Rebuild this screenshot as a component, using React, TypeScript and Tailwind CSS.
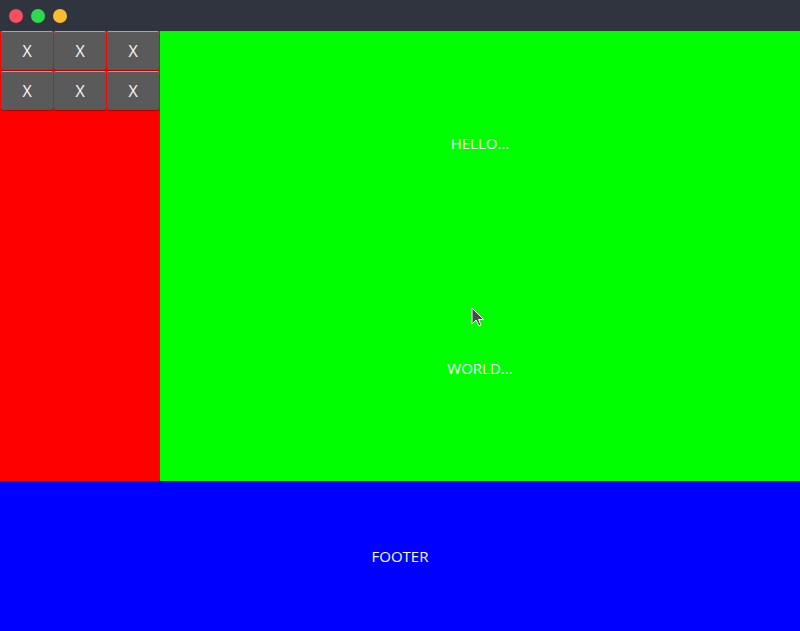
export default function App() {
  const cells = Array.from({ length: 6 });

  return (
    <div className="flex h-[631px] w-[800px] flex-col bg-[#0000ff] font-['Open_Sans',sans-serif] text-[15px] text-[#f8f8f8]">
      {/* Title bar */}
      <div className="flex h-[31px] shrink-0 items-center gap-2 bg-[#30343f] pl-[9px]">
        <span className="h-[14px] w-[14px] rounded-full bg-[#f74f5e]" />
        <span className="h-[14px] w-[14px] rounded-full bg-[#2ed94f]" />
        <span className="h-[14px] w-[14px] rounded-full bg-[#fbbd2f]" />
      </div>

      {/* Body */}
      <div className="flex h-[450px] shrink-0">
        <div className="w-[160px] shrink-0 bg-[#ff0000]">
          <div className="grid grid-cols-3 gap-[1px] px-[1px]">
            {cells.map((_, i) => (
              <button
                key={i}
                className="flex h-[39px] items-center justify-center rounded-[2px] border-t border-t-[#ff8080] bg-[#5a5a5a] text-[16px] text-[#f8f8f8] shadow-[0_1px_0_#b00000]"
              >
                X
              </button>
            ))}
          </div>
        </div>

        <div className="relative flex flex-1 flex-col bg-[#00ff00]">
          <div className="flex flex-1 items-center justify-center">HELLO...</div>
          <div className="flex flex-1 items-center justify-center">WORLD...</div>
          {/* mouse cursor */}
          <svg
            className="absolute left-[311px] top-[276px]"
            width="14"
            height="22"
            viewBox="0 0 14 22"
          >
            <path
              d="M1 1 L1 17 L5 13 L8 19 L10 18 L7.5 12.5 L12.5 12.5 Z"
              fill="#4a4a4a"
              stroke="#ffffff"
              strokeWidth="1"
              strokeLinejoin="round"
            />
          </svg>
        </div>
      </div>

      {/* Footer */}
      <div className="flex flex-1 items-center justify-center">FOOTER</div>
    </div>
  );
}
